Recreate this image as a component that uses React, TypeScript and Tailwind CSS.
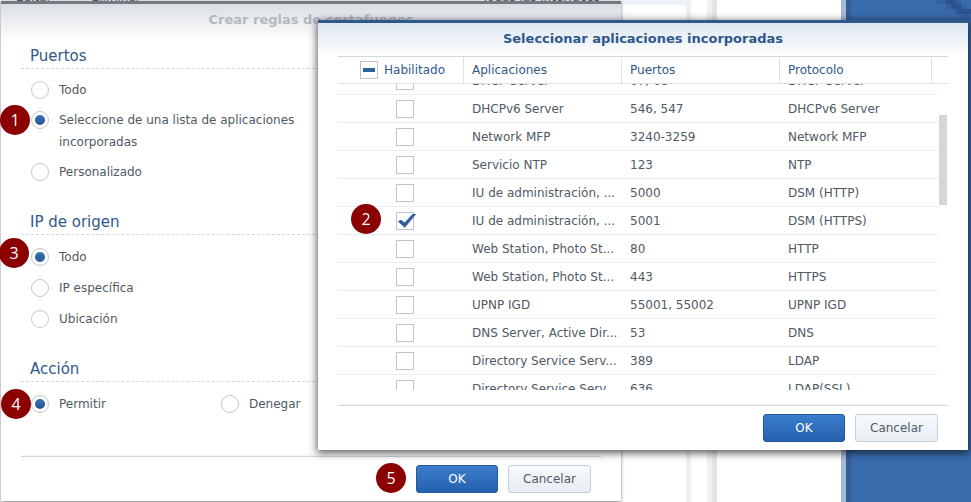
import { useEffect, useRef, useState } from "react";
import type { ReactNode } from "react";

type Rule = { app: string; ports: string; protocol: string };

const rules: Rule[] = [
  { app: "DHCP Server", ports: "67, 68", protocol: "DHCP Server" },
  { app: "DHCPv6 Server", ports: "546, 547", protocol: "DHCPv6 Server" },
  { app: "Network MFP", ports: "3240-3259", protocol: "Network MFP" },
  { app: "Servicio NTP", ports: "123", protocol: "NTP" },
  { app: "IU de administración, ...", ports: "5000", protocol: "DSM (HTTP)" },
  { app: "IU de administración, ...", ports: "5001", protocol: "DSM (HTTPS)" },
  { app: "Web Station, Photo St...", ports: "80", protocol: "HTTP" },
  { app: "Web Station, Photo St...", ports: "443", protocol: "HTTPS" },
  { app: "UPNP IGD", ports: "55001, 55002", protocol: "UPNP IGD" },
  { app: "DNS Server, Active Dir...", ports: "53", protocol: "DNS" },
  { app: "Directory Service Serv...", ports: "389", protocol: "LDAP" },
  { app: "Directory Service Serv...", ports: "636", protocol: "LDAP(SSL)" },
];

function Badge({ n, className }: { n: number; className: string }) {
  return (
    <span
      className={`absolute z-20 flex size-[30px] items-center justify-center rounded-full bg-[#8b0000] font-['Open_Sans',sans-serif] text-base font-medium text-white ${className}`}
    >
      {n}
    </span>
  );
}

function Section({ title, body, children }: { title: string; body: string; children: ReactNode }) {
  return (
    <fieldset className="min-w-0">
      <legend className="float-left h-6 w-full border-b border-dashed border-[#d3d8de] pl-[9px] text-[15px] leading-[22px] text-[#30588a]">
        {title}
      </legend>
      <div className={`clear-both flex flex-col pl-[10px] ${body}`}>{children}</div>
    </fieldset>
  );
}

function Radio(props: { name: string; label: string; checked: boolean; onPick: () => void; children?: ReactNode }) {
  return (
    <div className="relative flex">
      {props.children}
      <label className="flex gap-[10px] leading-[22px]">
        <input
          type="radio"
          name={props.name}
          checked={props.checked}
          onChange={props.onPick}
          className="mt-[2px] flex size-[18px] shrink-0 appearance-none items-center justify-center rounded-full border border-[#c3c8d1] bg-white before:size-[10px] before:rounded-full checked:before:bg-linear-to-b checked:before:from-[#3873b5] checked:before:to-[#265592]"
        />
        <span className="max-w-[240px]">{props.label}</span>
      </label>
    </div>
  );
}

function Actions() {
  return (
    <div className="flex justify-end gap-[10px] border-t border-[#d3d5d8] pt-2 pr-[10px] shadow-[0_-2px_2px_-1px_rgba(0,0,0,0.06)]">
      <button className="h-7 w-[82px] rounded-[3px] border border-[#24589c] bg-linear-to-b from-[#3b7dcb] to-[#2461af] text-white">
        OK
      </button>
      <button className="h-7 w-[83px] rounded-[3px] border border-[#c5cfd9] bg-linear-to-b from-[#f6fafd] to-[#e8edf2]">
        Cancelar
      </button>
    </div>
  );
}

function CheckBox(props: { label: string; checked: boolean; onChange: () => void }) {
  return (
    <span className="relative block size-[18px]">
      <input
        type="checkbox"
        aria-label={props.label}
        checked={props.checked}
        onChange={props.onChange}
        className="block size-[18px] appearance-none border border-[#bfc5ce] bg-white"
      />
      {props.checked && (
        <svg viewBox="0 0 20 18" className="pointer-events-none absolute top-0 left-0 h-[18px] w-5">
          <path d="M1.8 9.4 5 7.8 8.6 10.4 16.6 2H20.2L8.9 15.8Z" fill="#2f60a0" />
        </svg>
      )}
    </span>
  );
}

const headCell = "border-t border-r border-b border-[#dce2e9] border-t-[#cfd9e3] bg-white px-2 text-left font-normal";
const bodyCell = "whitespace-nowrap border-b border-[#ebedf0] pl-2";

export default function App() {
  const [ports, setPorts] = useState("list");
  const [source, setSource] = useState("all");
  const [action, setAction] = useState("allow");
  const [selected, setSelected] = useState<number[]>([5]);
  const scroller = useRef<HTMLDivElement>(null);
  const master = useRef<HTMLInputElement>(null);

  useEffect(() => {
    if (scroller.current) scroller.current.scrollTop = 17;
    if (master.current) master.current.indeterminate = true;
  }, []);

  const toggle = (i: number) =>
    setSelected((s) => (s.includes(i) ? s.filter((x) => x !== i) : [...s, i]));

  return (
    <div className="relative flex h-screen min-h-[502px] overflow-hidden bg-[#3a6bad] font-['DejaVu_Sans',Verdana,sans-serif] text-xs text-[#505a64]">
      <div className="flex w-[841px] bg-white">
        <div className="w-[686px]">
          <div className="flex h-[5px] items-end gap-10 overflow-hidden bg-[#edf3f7] pl-4 leading-4">
            <span>Editar</span>
            <span>Eliminar</span>
            <span className="mr-[86px] ml-auto">Todas las interfaces</span>
          </div>
        </div>
        <div className="w-[5px] bg-[#f0f0f1]" />
        <div className="w-4 bg-white" />
        <div className="w-[5px] bg-[#f0f0f0]" />
        <div className="w-[5px] bg-[#e4e4e4]" />
      </div>
      <div className="w-[5px] bg-[#a9bad2]" />
      <div className="w-[5px] bg-[#33609c]" />
      <svg viewBox="0 0 40 20" className="absolute top-0 right-0 h-5 w-10" shapeRendering="crispEdges">
        <path d="M5 0H30V5H35V10H40V20H30V14H22V9H15V4H5Z" fill="#34609f" />
        <path d="M15 0H25V4H30V9H40V14H26V9H20V4H15Z" fill="#2c5390" />
      </svg>

      <section className="absolute top-px bottom-px left-px flex w-[620px] flex-col border-t-[3px] border-[#737b80] bg-white shadow-[0_1px_3px_0_rgba(60,60,60,0.7)]">
        <h1 className="h-[41px] bg-linear-to-b from-[#dadee3] to-white to-90% pt-[6px] text-center text-[13px] leading-5 font-bold text-[#b3b9c0]">
          Crear reglas de cortafuegos
        </h1>
        <div className="flex flex-1 flex-col gap-7 px-5">
          <Section title="Puertos" body="gap-2 pt-[10px]">
            <Radio name="ports" label="Todo" checked={ports === "all"} onPick={() => setPorts("all")} />
            <Radio
              name="ports"
              label="Seleccione de una lista de aplicaciones incorporadas"
              checked={ports === "list"}
              onPick={() => setPorts("list")}
            >
              <Badge n={1} className="-top-1 -left-[31px]" />
            </Radio>
            <Radio name="ports" label="Personalizado" checked={ports === "custom"} onPick={() => setPorts("custom")} />
          </Section>
          <Section title="IP de origen" body="gap-[9px] pt-[11px]">
            <Radio name="source" label="Todo" checked={source === "all"} onPick={() => setSource("all")}>
              <Badge n={3} className="-top-2 -left-8" />
            </Radio>
            <Radio name="source" label="IP específica" checked={source === "ip"} onPick={() => setSource("ip")} />
            <Radio name="source" label="Ubicación" checked={source === "geo"} onPick={() => setSource("geo")} />
          </Section>
          <Section title="Acción" body="pt-[11px]">
            <div className="grid grid-cols-[190px_1fr]">
              <Radio name="action" label="Permitir" checked={action === "allow"} onPick={() => setAction("allow")}>
                <Badge n={4} className="-top-1 -left-[30px]" />
              </Radio>
              <Radio name="action" label="Denegar" checked={action === "deny"} onPick={() => setAction("deny")} />
            </div>
          </Section>
        </div>
        <div className="relative px-5 pb-2">
          <Badge n={5} className="top-[7px] left-[375px]" />
          <Actions />
        </div>
      </section>

      <section className="absolute top-5 right-[3px] z-10 flex h-[430px] w-[650px] flex-col border-t-[3px] border-[#2d5a8b] bg-white px-5 shadow-[0_2px_8px_1px_rgba(0,0,0,0.65)]">
        <h2 className="-mx-5 h-[33px] bg-linear-to-b from-[#dde7f1] to-white pt-[6px] text-center text-[13px] leading-5 font-bold text-[#30588a]">
          Seleccionar aplicaciones incorporadas
        </h2>
        <div className="relative">
          <div ref={scroller} className="h-[334px] overflow-hidden">
            <table className="w-full table-fixed border-separate border-spacing-0">
              <thead className="sticky top-0 z-10 text-[#30588a]">
                <tr className="h-7">
                  <th className={`${headCell} w-[126px]`}>
                    <label className="flex items-center gap-[6px] pl-[14px]">
                      <input
                        ref={master}
                        type="checkbox"
                        className="flex size-[18px] appearance-none items-center justify-center border border-[#bfc5ce] bg-white before:h-1 before:w-3 before:bg-[#2f60a0]"
                      />
                      Habilitado
                    </label>
                  </th>
                  <th className={`${headCell} w-[158px]`}>Aplicaciones</th>
                  <th className={`${headCell} w-[158px]`}>Puertos</th>
                  <th className={headCell}>Protocolo</th>
                  <td className="w-[6px] border-t border-b border-[#dce2e9] border-t-[#cfd9e3] bg-white p-0" />
                  <td className="w-[10px] border-t border-b border-[#dce2e9] border-t-[#cfd9e3] bg-white p-0" />
                </tr>
              </thead>
              <tbody>
                {rules.map((r, i) => (
                  <tr key={r.protocol + i} className="h-7">
                    <td className="border-b border-[#ebedf0] p-0 pl-[58px]">
                      <CheckBox label={r.protocol} checked={selected.includes(i)} onChange={() => toggle(i)} />
                    </td>
                    <td className={bodyCell}>{r.app}</td>
                    <td className={bodyCell}>{r.ports}</td>
                    <td className={bodyCell}>{r.protocol}</td>
                    <td className="border-b border-[#ebedf0] p-0" />
                    <td className="p-0" />
                  </tr>
                ))}
              </tbody>
            </table>
          </div>
          <div className="absolute top-[59px] right-px z-10 h-[90px] w-2 bg-[#d5d6d8]" />
          <Badge n={2} className="top-[148px] left-[13px]" />
        </div>
        <div className="mt-auto pb-2">
          <Actions />
        </div>
      </section>
    </div>
  );
}
